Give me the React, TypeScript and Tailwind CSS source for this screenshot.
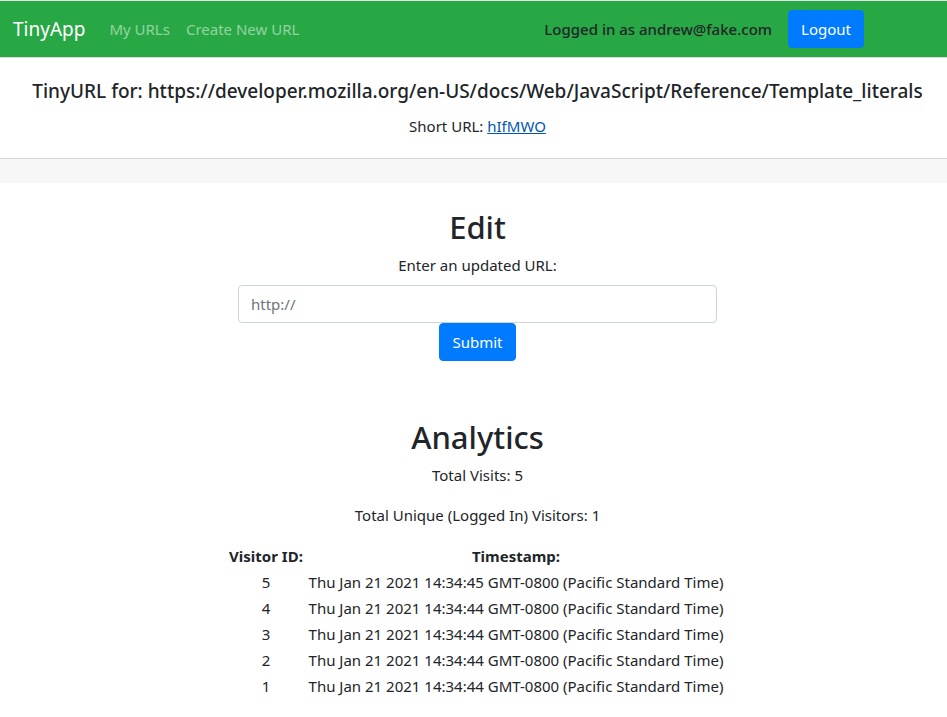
const visits = [
  { id: 5, time: "Thu Jan 21 2021 14:34:45 GMT-0800 (Pacific Standard Time)" },
  { id: 4, time: "Thu Jan 21 2021 14:34:44 GMT-0800 (Pacific Standard Time)" },
  { id: 3, time: "Thu Jan 21 2021 14:34:44 GMT-0800 (Pacific Standard Time)" },
  { id: 2, time: "Thu Jan 21 2021 14:34:44 GMT-0800 (Pacific Standard Time)" },
  { id: 1, time: "Thu Jan 21 2021 14:34:44 GMT-0800 (Pacific Standard Time)" },
];

const button =
  "h-[38px] min-w-[76px] rounded border border-[#007bff] bg-[#007bff] px-3 text-[15px] leading-6 text-white hover:bg-[#0069d9]";

function NavBar() {
  return (
    <header className="flex h-[57px] items-center border-b border-[#dfdfdf] bg-[#28a745] pl-[13px]">
      <nav className="flex flex-1 items-center">
        <a href="#" className="mr-6 text-[19px] leading-[30px] text-white">TinyApp</a>
        <a href="#urls" className="mr-4 text-white/50">My URLs</a>
        <a href="#new" className="text-white/50">Create New URL</a>
      </nav>
      <form className="mr-[83px] flex items-center gap-4" onSubmit={(e) => e.preventDefault()}>
        <span className="font-medium">Logged in as andrew@fake.com</span>
        <button type="submit" className={button}>Logout</button>
      </form>
    </header>
  );
}

export default function App() {
  return (
    <div className="border-t border-[#dee2e6] bg-white font-['Noto_Sans','Open_Sans',sans-serif] text-[15px] leading-6 text-[#212529]">
      <NavBar />
      <section className="border-b border-[#d6d6d6] pt-[21px] pb-5 pl-2 text-center">
        <h5 className="mb-[11px] text-[19px] leading-6 font-medium whitespace-nowrap">
          TinyURL for: https://developer.mozilla.org/en-US/docs/Web/JavaScript/Reference/Template_literals
        </h5>
        <p>
          Short URL: <a href="#hIfMWO" className="text-[#0056b3] underline">hIfMWO</a>
        </p>
      </section>
      <div className="h-6 bg-[#f7f7f7]" />
      <main className="flex flex-col items-center pl-2 text-center">
        <h2 className="mt-[25px] mb-[7px] text-[31px] leading-[38px] font-medium">Edit</h2>
        <form className="flex w-[479px] flex-col items-center" onSubmit={(e) => e.preventDefault()}>
          <label htmlFor="url" className="mb-2">Enter an updated URL:</label>
          <input
            id="url"
            type="text"
            placeholder="http://"
            className="h-[38px] w-full rounded border border-[#ced4da] px-3 placeholder:text-[#6c757d]"
          />
          <button type="submit" className={button}>Submit</button>
        </form>
        <h2 className="mt-[57px] mb-[7px] text-[31px] leading-[38px] font-medium">Analytics</h2>
        <p className="mb-4">Total Visits: 5</p>
        <p className="mb-[15px]">Total Unique (Logged In) Visitors: 1</p>
        <table className="border-separate border-spacing-[2px]">
          <thead>
            <tr>
              <th className="w-[75px]">Visitor ID:</th>
              <th className="w-[421px]">Timestamp:</th>
            </tr>
          </thead>
          <tbody>
            {visits.map((v) => (
              <tr key={v.id}>
                <td>{v.id}</td>
                <td>{v.time}</td>
              </tr>
            ))}
          </tbody>
        </table>
      </main>
    </div>
  );
}
